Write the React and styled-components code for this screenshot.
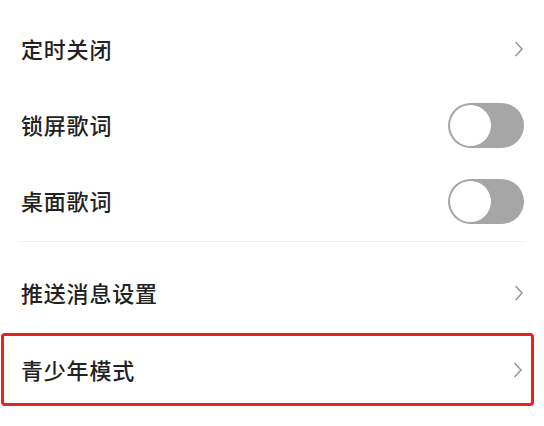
import styled, { createGlobalStyle } from "styled-components";

const GlobalStyle = createGlobalStyle`
  body {
    margin: 0;
    background: #fff;
    font-family: "Noto Sans CJK SC", "Noto Sans", sans-serif;
  }
`;

const Page = styled.div`
  width: 544px;
  height: 426px;
  overflow: hidden;
  box-sizing: border-box;
  padding-top: 11px;
  display: flex;
  flex-direction: column;
`;

const Row = styled.div`
  box-sizing: border-box;
  height: 76px;
  display: flex;
  align-items: center;
  justify-content: space-between;
  padding: 0 20px 0 21px;
`;

const Label = styled.div`
  color: #222;
  font-size: 22px;
  line-height: 26px;
  font-weight: 500;
  letter-spacing: 0.8px;
  margin-top: -2px;
`;

const Divider = styled.div`
  height: 1px;
  margin: 2px 20px 13px 20px;
  background: #f0f0f0;
`;

const Highlight = styled.div`
  box-sizing: border-box;
  width: 533px;
  height: 73px;
  margin: 2px 0 0 1px;
  border: 3px solid #e4241d;
  border-radius: 4px;
  display: flex;
  align-items: center;
  justify-content: space-between;
  padding: 0 8px 0 17px;
`;

const Track = styled.div`
  box-sizing: border-box;
  width: 76px;
  height: 45px;
  border-radius: 23px;
  background: #a6a6a6;
  padding: 2px;
  display: flex;
  justify-content: ${(p) => (p.$on ? "flex-end" : "flex-start")};
`;

const Knob = styled.div`
  width: 41px;
  height: 41px;
  border-radius: 50%;
  background: #fff;
`;

const Chevron = () => (
  <svg width="10" height="16" viewBox="0 0 10 16">
    <polyline
      points="2,1.5 8,8 2,14.5"
      fill="none"
      stroke="#9a9a9a"
      strokeWidth="1.7"
      strokeLinecap="round"
      strokeLinejoin="round"
    />
  </svg>
);

const Toggle = ({ on }) => (
  <Track $on={on}>
    <Knob />
  </Track>
);

export default function App() {
  return (
    <Page>
      <GlobalStyle />
      <Row>
        <Label>定时关闭</Label>
        <Chevron />
      </Row>
      <Row>
        <Label>锁屏歌词</Label>
        <Toggle on={false} />
      </Row>
      <Row>
        <Label>桌面歌词</Label>
        <Toggle on={false} />
      </Row>
      <Divider />
      <Row>
        <Label>推送消息设置</Label>
        <Chevron />
      </Row>
      <Highlight>
        <Label>青少年模式</Label>
        <Chevron />
      </Highlight>
    </Page>
  );
}
